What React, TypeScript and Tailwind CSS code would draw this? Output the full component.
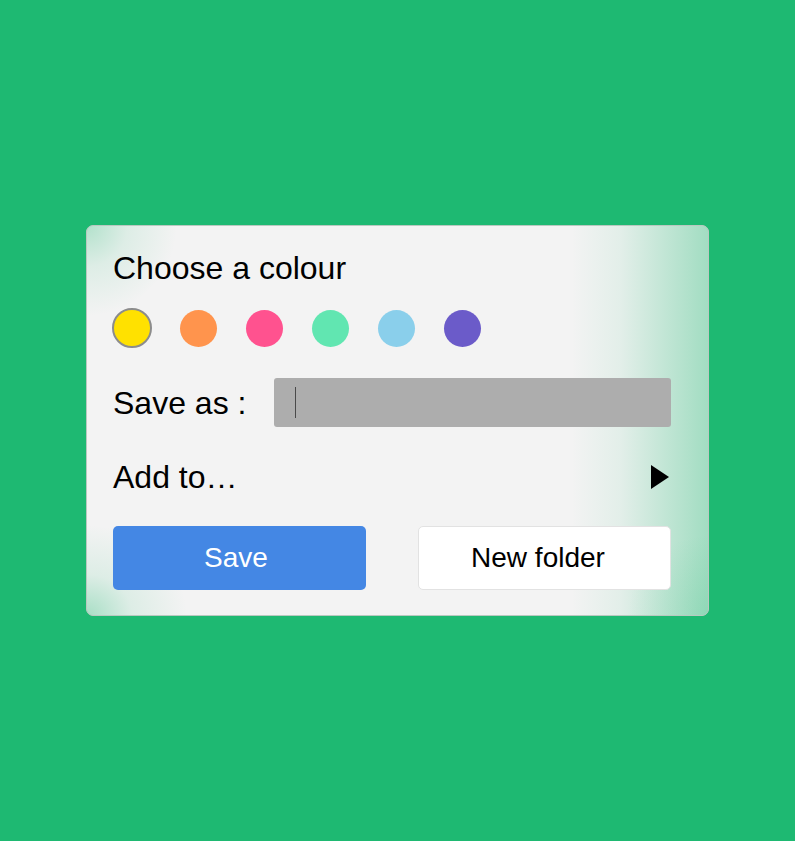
import React from 'react';

const swatches = ['#ffe100', '#ff944d', '#ff528f', '#61e6b1', '#8acfeb', '#6b5bc9'];

export default function App() {
  return (
    <div className="w-[795px] h-[841px] bg-[#1eb972] pt-[225px] pl-[86px] font-['Liberation_Sans',Arial,sans-serif] text-black">
      <div
        className="w-[623px] h-[391px] rounded-[7px] border border-[#b9c9c0] bg-[#f3f3f3] pl-[26px] pr-[37px] pt-[26px] flex flex-col [background-image:radial-gradient(ellipse_90px_90px_at_0_0,rgba(30,185,114,0.3),rgba(30,185,114,0.1)_45%,rgba(30,185,114,0)),radial-gradient(ellipse_100px_90px_at_0_100%,rgba(30,185,114,0.35),rgba(30,185,114,0.1)_45%,rgba(30,185,114,0)),radial-gradient(ellipse_80px_80px_at_100%_100%,rgba(30,185,114,0.15),rgba(30,185,114,0)),linear-gradient(to_right,rgba(30,185,114,0)_78%,rgba(30,185,114,0.08)_86%,rgba(30,185,114,0.38))]"
      >
        <h2 className="text-[32px] leading-none font-normal">Choose a colour</h2>

        <div className="flex items-center gap-[26px] mt-[24px] -ml-px">
          {swatches.map((c, i) => (
            <div key={c} className="w-[40px] h-[40px] flex items-center justify-center">
              <div
                className={`rounded-full ${i === 0 ? 'w-[40px] h-[40px] border-2 border-[#8c8c8c]' : 'w-[37px] h-[37px]'}`}
                style={{ backgroundColor: c }}
              />
            </div>
          ))}
        </div>

        <div className="flex items-center mt-[30px] h-[49px]">
          <span className="text-[32px] leading-none w-[161px]">Save as :</span>
          <div className="flex-1 h-[49px] bg-[#adadad] rounded-[3px] flex items-center pl-[21px]">
            <div className="w-px h-[31px] bg-[#4a4a4a]" />
          </div>
        </div>

        <div className="flex items-center justify-between mt-[34px] h-[31px]">
          <span className="text-[32px] leading-none">Add to…</span>
          <svg width="18" height="24" viewBox="0 0 18 24" className="mr-[2px]">
            <polygon points="0,0 18,12 0,24" fill="#000" />
          </svg>
        </div>

        <div className="flex justify-between mt-[34px]">
          <button className="w-[253px] h-[64px] rounded-[5px] bg-[#4487e4] text-white text-[28px] leading-none pr-[7px]">
            Save
          </button>
          <button className="w-[253px] h-[64px] rounded-[5px] bg-white border border-[#e2e2e2] text-black text-[28px] leading-none pr-[13px]">
            New folder
          </button>
        </div>
      </div>
    </div>
  );
}
